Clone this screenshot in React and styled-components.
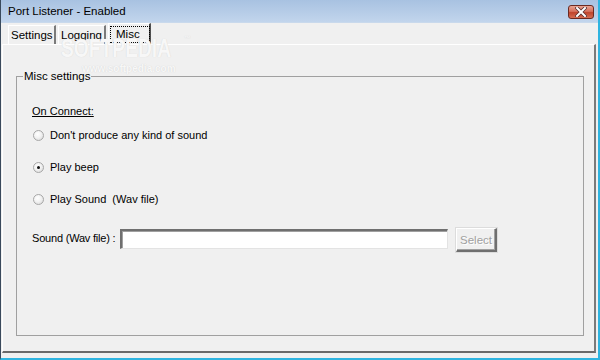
import React from 'react';
import styled, { createGlobalStyle } from 'styled-components';

const GlobalStyle = createGlobalStyle`
  html, body {
    margin: 0;
    padding: 0;
    background: #f0f0f0;
  }
  body {
    font-family: "Liberation Sans", Arial, sans-serif;
    font-size: 11px;
    color: #000;
  }
`;

const Window = styled.div`
  position: relative;
  width: 600px;
  height: 360px;
  box-sizing: border-box;
  background: #f0f0f0;
  border-left: 1px solid #3a4a5c;
  border-right: 2px solid #2fb4e0;
  border-bottom: 2px solid #2fb4e0;
  display: flex;
  flex-direction: column;
  overflow: hidden;
`;

const TitleBar = styled.div`
  height: 22px;
  flex: none;
  display: flex;
  align-items: center;
  justify-content: space-between;
  padding: 0 4px 0 7px;
  background: linear-gradient(#a8c2e1, #c2d5ec);
  border-bottom: 1px solid #c9d9ec;
`;

const Title = styled.span`
  font-family: "Liberation Sans", Arial, sans-serif;
  font-size: 11.5px;
  color: #000;
`;

const CloseButton = styled.div`
  width: 26px;
  height: 14px;
  margin-top: 2px;
  box-sizing: border-box;
  border: 1px solid #6b2a22;
  border-radius: 3px;
  background: linear-gradient(#e9a393 0%, #d5705c 45%, #c0442c 55%, #d66e54 100%);
  display: flex;
  align-items: center;
  justify-content: center;
`;

const Body = styled.div`
  flex: 1;
  display: flex;
  flex-direction: column;
  padding: 0 0 5px 1px;
`;

const TabBar = styled.div`
  height: 21px;
  display: flex;
  align-items: flex-end;
  padding-left: 6px;
  gap: 2px;
`;

const Tab = styled.div`
  width: ${(p) => p.$w}px;
  height: ${(p) => (p.$active ? 21 : 19)}px;
  box-sizing: border-box;
  display: flex;
  align-items: ${(p) => (p.$active ? 'flex-start' : 'center')};
  padding: ${(p) => (p.$active ? '2px 1px 0 1px' : '0 0 0 2px')};
  border-left: 1px solid #ffffff;
  border-top: 1px solid #ffffff;
  border-right: 2px solid ${(p) => (p.$active ? '#505050' : '#7a7a7a')};
  font-size: 11.5px;
  white-space: nowrap;
`;

const FocusText = styled.span`
  border: 1px dotted #000;
  padding: 0 9px 1px 5px;
  line-height: 14px;
`;

const Panel = styled.div`
  position: relative;
  flex: 1;
  margin-right: 2px;
  box-sizing: border-box;
  border-top: 1px solid #ffffff;
  border-left: 1px solid #ffffff;
  border-right: 2px solid #7a7a7a;
  border-bottom: 2px solid #6a6a6a;
  padding: 25px 10px 15px 13px;
  display: flex;
`;

const GroupBox = styled.fieldset`
  flex: 1;
  margin: 0;
  border: 1px solid #a0a0a0;
  padding: 22px 0 0 15px;
  display: flex;
  flex-direction: column;
  min-width: 0;
`;

const Legend = styled.legend`
  padding: 0 1px;
  margin-left: -9px;
  font-size: 11.5px;
  line-height: 12px;
`;

const SectionLabel = styled.div`
  text-decoration: underline;
  font-size: 11px;
  height: 14px;
  line-height: 14px;
  margin-bottom: 9px;
`;

const RadioRow = styled.label`
  display: flex;
  align-items: center;
  height: 16px;
  margin-bottom: 16px;
  font-size: 11px;
  gap: 6px;
  padding-left: 1px;
  white-space: nowrap;
`;

const RadioDot = styled.span`
  width: 11px;
  height: 11px;
  box-sizing: border-box;
  border-radius: 50%;
  border: 1px solid #a7a7a7;
  background: radial-gradient(circle at 40% 35%, #ffffff 0%, #f2f2f2 45%, #d4d4d4 100%);
  display: flex;
  align-items: center;
  justify-content: center;
  &::after {
    content: '';
    width: 3px;
    height: 3px;
    border-radius: 50%;
    background: ${(p) => (p.$checked ? '#111' : 'transparent')};
  }
`;

const FileRow = styled.div`
  display: flex;
  align-items: flex-start;
  margin-top: 6px;
`;

const FileLabel = styled.span`
  font-size: 11px;
  letter-spacing: -0.2px;
  margin-top: 3px;
  width: 88px;
  white-space: nowrap;
`;

const FileInput = styled.div`
  width: 328px;
  height: 20px;
  box-sizing: border-box;
  background: #fff;
  border-top: 2px solid #6f6f6f;
  border-left: 2px solid #6f6f6f;
  border-right: 1px solid #e3e3e3;
  border-bottom: 1px solid #e3e3e3;
  box-shadow: inset 1px 1px 0 #a0a0a0;
`;

const SelectButton = styled.div`
  width: 41px;
  height: 24px;
  margin-left: 8px;
  margin-top: -1px;
  box-sizing: border-box;
  border-top: 1px solid #ffffff;
  border-left: 1px solid #ffffff;
  border-right: 2px solid #6f6f6f;
  border-bottom: 2px solid #6f6f6f;
  box-shadow: inset -1px -1px 0 #a0a0a0, 0 0 0 1px #dcdcdc;
  display: flex;
  align-items: center;
  justify-content: center;
  color: #a0a0a0;
  font-size: 11.5px;
  text-shadow: 1px 1px 0 #ffffff;
`;

const Watermark = styled.div`
  position: absolute;
  left: ${(p) => p.$x}px;
  top: ${(p) => p.$y}px;
  font-family: "Liberation Sans", Arial, sans-serif;
  font-size: ${(p) => p.$size}px;
  line-height: 1;
  font-weight: bold;
  color: #f7f7f7;
  text-shadow: 0 0 1px #cfcfcf;
  transform: scaleX(${(p) => p.$sx || 1});
  transform-origin: left top;
  pointer-events: none;
  white-space: nowrap;
`;

function App() {
  return (
    <>
      <GlobalStyle />
      <Window>
        <TitleBar>
          <Title>Port Listener - Enabled</Title>
          <CloseButton>
            <svg width="12" height="10" viewBox="0 0 12 10">
              <path d="M2 1 L10 9 M10 1 L2 9" stroke="#5a3030" strokeWidth="3.6" strokeLinecap="square" />
              <path d="M2 1 L10 9 M10 1 L2 9" stroke="#ffffff" strokeWidth="2" strokeLinecap="square" />
            </svg>
          </CloseButton>
        </TitleBar>
        <Body>
          <TabBar>
            <Tab $w={48}>Settings</Tab>
            <Tab $w={48}>Logging</Tab>
            <Tab $w={43} $active>
              <FocusText>Misc</FocusText>
            </Tab>
          </TabBar>
          <Panel>
            <Watermark $x={58} $y={-10} $size={26} $sx={0.74}>SOFTPEDIA</Watermark>
            <Watermark $x={181} $y={-10} $size={7}>™</Watermark>
            <Watermark $x={79} $y={19} $size={10}>www.softpedia.com</Watermark>
            <GroupBox>
              <Legend>Misc settings</Legend>
              <SectionLabel>On Connect:</SectionLabel>
              <RadioRow>
                <RadioDot />
                Don't produce any kind of sound
              </RadioRow>
              <RadioRow>
                <RadioDot $checked />
                Play beep
              </RadioRow>
              <RadioRow>
                <RadioDot />
                Play Sound&nbsp; (Wav file)
              </RadioRow>
              <FileRow>
                <FileLabel>Sound (Wav file) :</FileLabel>
                <FileInput />
                <SelectButton>Select</SelectButton>
              </FileRow>
            </GroupBox>
          </Panel>
        </Body>
      </Window>
    </>
  );
}

export default App;
